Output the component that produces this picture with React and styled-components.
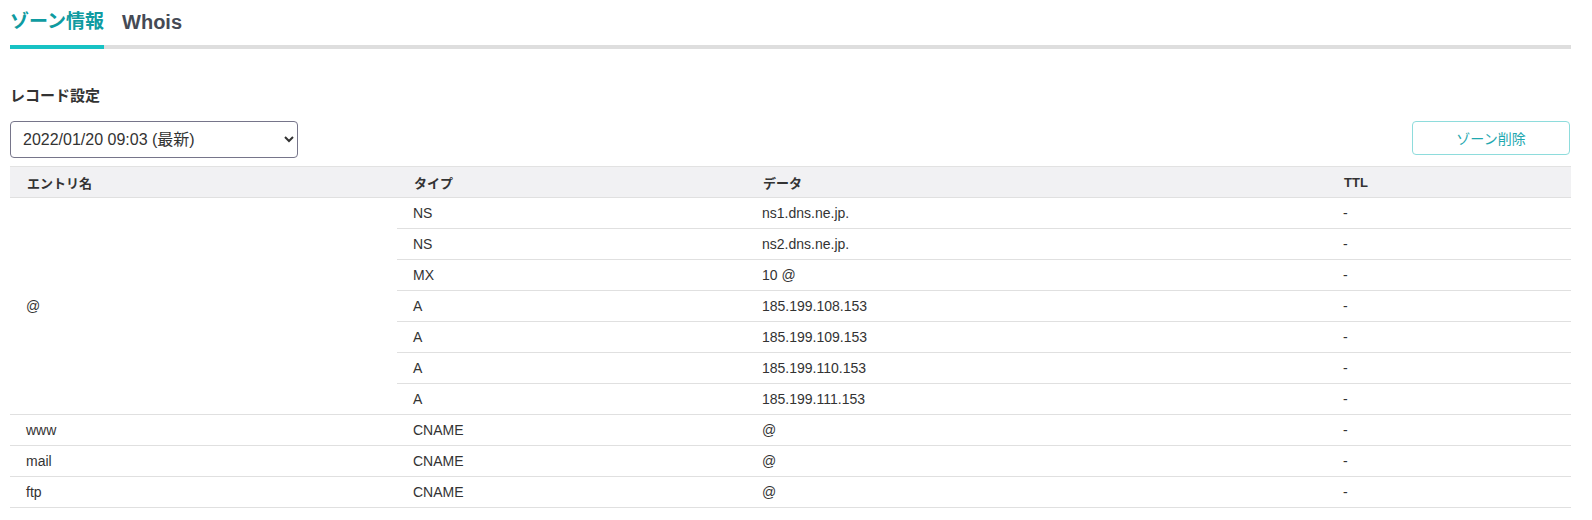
import styled, { createGlobalStyle } from "styled-components";

const GlobalStyle = createGlobalStyle`
  body {
    margin: 0;
    background: #fff;
    font-family: "Liberation Sans", Arial, "Noto Sans CJK JP", sans-serif;
    color: #333;
  }
`;

const Page = styled.div`
  padding: 0 21px 0 10px;
`;

const TabBar = styled.div`
  display: flex;
  gap: 18px;
  border-bottom: 4px solid #dedede;
`;

const Tab = styled.div`
  height: 45px;
  line-height: 44px;
  font-size: ${(props) => (props.latin ? "20px" : "19px")};
  font-weight: 700;
  color: ${(props) => (props.active ? "#0f9ba1" : "#454a55")};
  border-bottom: 4px solid ${(props) => (props.active ? "#17c2c4" : "transparent")};
  margin-bottom: -4px;
`;

const SectionTitle = styled.h2`
  margin: 37px 0 0;
  font-size: 15px;
  line-height: 20px;
  font-weight: 700;
  color: #333;
`;

const Toolbar = styled.div`
  display: flex;
  justify-content: space-between;
  align-items: flex-start;
  margin-top: 15px;
`;

const Select = styled.select`
  width: 288px;
  height: 37px;
  padding: 0 8px;
  font-family: "Liberation Sans", Arial, "Noto Sans CJK JP", sans-serif;
  font-size: 16px;
  color: #333;
  background: #fff;
  border: 1px solid #76758a;
  border-radius: 4px;
`;

const DeleteButton = styled.button`
  width: 158px;
  height: 34px;
  margin-right: 1px;
  font-family: "Liberation Sans", Arial, "Noto Sans CJK JP", sans-serif;
  font-size: 14px;
  color: #1fa8b0;
  background: #fff;
  border: 1px solid #8edcdc;
  border-radius: 4px;
`;

const Table = styled.table`
  width: 100%;
  margin-top: 8px;
  border-collapse: collapse;
  table-layout: fixed;
  font-size: 14px;
`;

const Th = styled.th`
  height: 30px;
  padding: 0 0 0 17px;
  text-align: left;
  font-size: 13px;
  font-weight: 700;
  color: #333;
  background: #f1f1f3;
  border-top: 1px solid #e2e2e2;
  border-bottom: 1px solid #e0e0e0;
`;

const Td = styled.td`
  height: 30px;
  padding: 0 0 0 16px;
  text-align: left;
  color: #333;
  border-bottom: 1px solid #e0e0e0;
  vertical-align: middle;
`;

const records = [
  { name: "@", span: 7, type: "NS", data: "ns1.dns.ne.jp." },
  { type: "NS", data: "ns2.dns.ne.jp." },
  { type: "MX", data: "10 @" },
  { type: "A", data: "185.199.108.153" },
  { type: "A", data: "185.199.109.153" },
  { type: "A", data: "185.199.110.153" },
  { type: "A", data: "185.199.111.153" },
  { name: "www", span: 1, type: "CNAME", data: "@" },
  { name: "mail", span: 1, type: "CNAME", data: "@" },
  { name: "ftp", span: 1, type: "CNAME", data: "@" },
];

const App = () => {
  return (
    <Page>
      <GlobalStyle />
      <TabBar>
        <Tab active>ゾーン情報</Tab>
        <Tab latin>Whois</Tab>
      </TabBar>
      <SectionTitle>レコード設定</SectionTitle>
      <Toolbar>
        <Select defaultValue="latest">
          <option value="latest">2022/01/20 09:03 (最新)</option>
        </Select>
        <DeleteButton>ゾーン削除</DeleteButton>
      </Toolbar>
      <Table>
        <colgroup>
          <col style={{ width: "387px" }} />
          <col style={{ width: "349px" }} />
          <col style={{ width: "581px" }} />
          <col />
        </colgroup>
        <thead>
          <tr>
            <Th>エントリ名</Th>
            <Th>タイプ</Th>
            <Th>データ</Th>
            <Th>TTL</Th>
          </tr>
        </thead>
        <tbody>
          {records.map((r, i) => (
            <tr key={i}>
              {r.name && <Td rowSpan={r.span}>{r.name}</Td>}
              <Td>{r.type}</Td>
              <Td>{r.data}</Td>
              <Td>-</Td>
            </tr>
          ))}
        </tbody>
      </Table>
    </Page>
  );
};

export default App;
